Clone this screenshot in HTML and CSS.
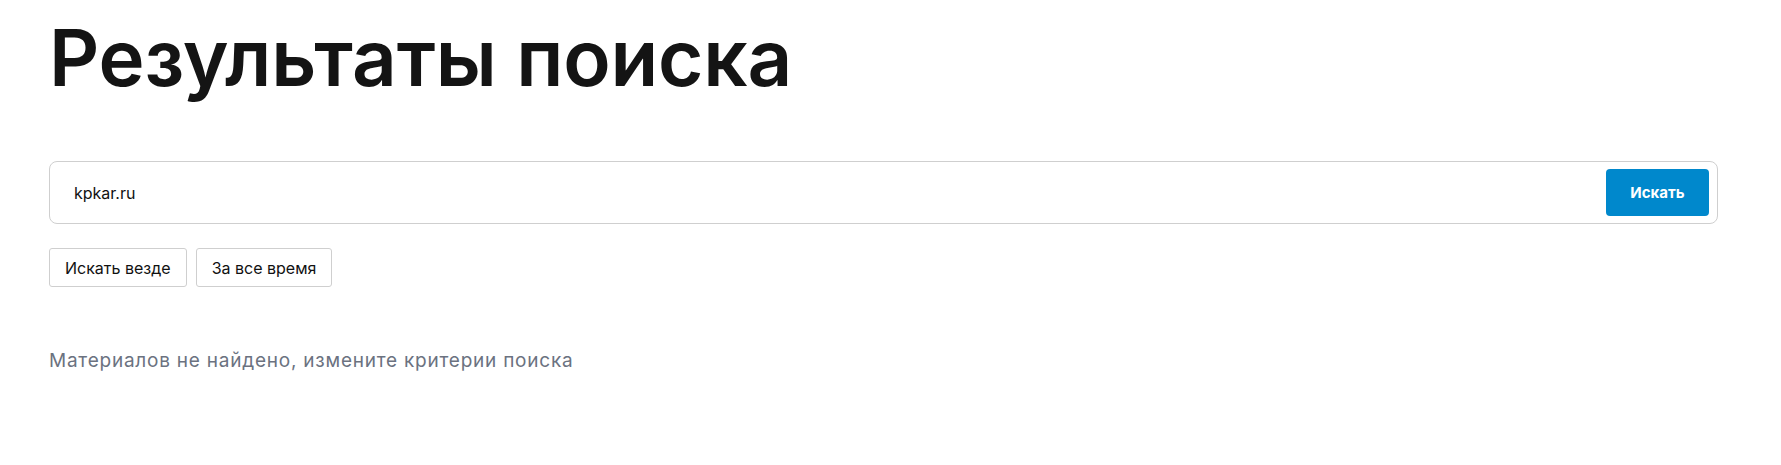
FILE: index.html
```html
<!DOCTYPE html>
<html lang="ru">
<head>
<meta charset="utf-8">
<title>Результаты поиска</title>
<link rel="stylesheet" href="styles.css">
</head>
<body>
<main class="page">
  <h1 class="title">Результаты поиска</h1>
  <form class="search">
    <input class="search-input" type="text" value="kpkar.ru">
    <button class="search-btn" type="button">Искать</button>
  </form>
  <div class="filters">
    <button class="filter" type="button">Искать везде</button>
    <button class="filter" type="button">За все время</button>
  </div>
  <p class="empty">Материалов не найдено, измените критерии поиска</p>
</main>
</body>
</html>
```
FILE: styles.css
```css
* { box-sizing: border-box; }
html, body { margin: 0; padding: 0; background: #fff; }
body { font-family: Inter, "Noto Sans", sans-serif; color: #111; }
.page { width: 1669px; margin-left: 49px; padding-top: 10px; }
.title {
  margin: 0;
  font-size: 78px;
  font-weight: 600;
  line-height: 96px;
  letter-spacing: -0.2px;
  color: #141414;
}
.search {
  margin-top: 55px;
  height: 63px;
  border: 1px solid #cfcfcf;
  border-radius: 8px;
  display: flex;
  align-items: center;
  padding: 0 8px 0 24px;
}
.search-input {
  flex: 1;
  border: 0;
  outline: 0;
  font-family: inherit;
  font-size: 16px;
  color: #111;
  padding: 0;
  background: transparent;
}
.search-btn {
  width: 103px;
  height: 47px;
  border: 0;
  border-radius: 4px;
  background: #0088cc;
  color: #fff;
  font-family: inherit;
  font-weight: 700;
  font-size: 15px;
}
.filters { display: flex; gap: 9px; margin-top: 24px; }
.filter {
  height: 39px;
  padding: 0 15px;
  border: 1px solid #cfcfcf;
  border-radius: 3px;
  background: #fff;
  font-family: inherit;
  font-size: 16px;
  color: #111;
}
.empty {
  margin: 62px 0 0;
  font-size: 19px;
  letter-spacing: 0.77px;
  color: #6b7280;
}
```
